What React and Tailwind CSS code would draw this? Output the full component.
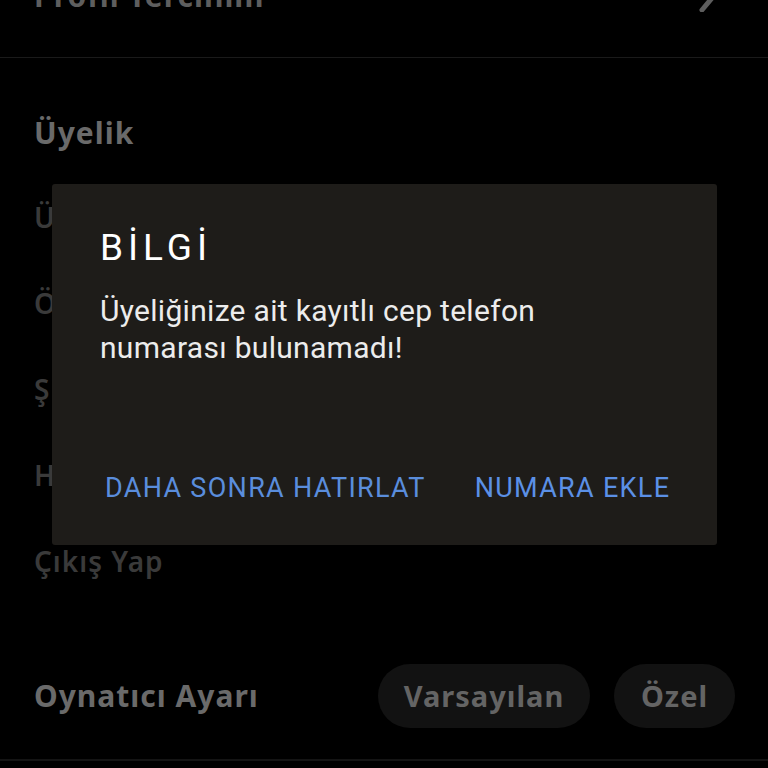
import React from "react";

const menuItems = [
  "Üyelik Bilgilerim",
  "Ödeme Bilgilerim",
  "Şifre Değiştir",
  "Hesabımı Sil",
];

function InfoDialog() {
  return (
    <div className="absolute left-[52px] top-[184px] w-[665px] h-[361px] rounded-[3px] bg-[#1e1c19] font-['Roboto',sans-serif]">
      <div className="pl-[48px] pt-[42px] pr-[40px]">
        <h2 className="text-[37px] leading-[44px] font-normal tracking-[5px] text-white">
          BİLGİ
        </h2>
        <p className="mt-[22px] text-[30px] leading-[37px] tracking-[0.3px] text-[#ececec]">
          Üyeliğinize ait kayıtlı cep telefon
          <br />
          numarası bulunamadı!
        </p>
      </div>
      <div className="flex gap-[49px] pl-[53px] mt-[106px]">
        <button className="text-[27px] leading-[32px] tracking-[1.3px] text-[#5a8ddc]">
          DAHA SONRA HATIRLAT
        </button>
        <button className="text-[27px] leading-[32px] tracking-[1.3px] text-[#5b90e6]">
          NUMARA EKLE
        </button>
      </div>
    </div>
  );
}

export default function App() {
  return (
    <div className="relative w-[768px] h-[768px] overflow-hidden bg-black font-['Noto_Sans',sans-serif] tracking-[1px]">
      {/* profile header, scrolled partly out of view */}
      <div className="h-[58px] border-b border-[#1a1a1a] flex items-start justify-between px-[34px]">
        <span className="-mt-[23px] text-[30px] leading-[38px] font-bold text-[#5e5e5e]">
          Profil Tercihim
        </span>
        <svg width="24" height="24" viewBox="0 0 24 24" className="-mt-[12px] mr-[12px]">
          <path d="M4 22 L14 10" stroke="#5e5e5e" strokeWidth="5" strokeLinecap="round" />
        </svg>
      </div>

      <div className="px-[34px]">
        <div className="pt-[56px] text-[30px] leading-[38px] font-bold text-[#6a6a6a]">
          Üyelik
        </div>
        <ul className="mt-[47px] flex flex-col gap-[49px]">
          {menuItems.map((item) => (
            <li key={item} className="text-[28px] leading-[37px] font-semibold text-[#3a3a3a]">
              {item}
            </li>
          ))}
          <li className="text-[28px] leading-[37px] font-semibold text-[#3a3a3a]">
            Çıkış Yap
          </li>
        </ul>
      </div>

      {/* player setting row */}
      <div className="absolute left-0 right-0 top-[664px] flex items-center px-[34px] pr-[33px]">
        <span className="flex-1 text-[30px] leading-[38px] font-bold text-[#6a6a6a]">
          Oynatıcı Ayarı
        </span>
        <div className="flex gap-[24px]">
          <button className="h-[64px] w-[212px] rounded-full bg-[#121212] text-[29px] font-bold text-[#646464]">
            Varsayılan
          </button>
          <button className="h-[64px] w-[121px] rounded-full bg-[#121212] text-[29px] font-bold text-[#646464]">
            Özel
          </button>
        </div>
      </div>
      <div className="absolute left-0 right-0 top-[759px] h-[2px] bg-[#141414]" />

      <InfoDialog />
    </div>
  );
}
